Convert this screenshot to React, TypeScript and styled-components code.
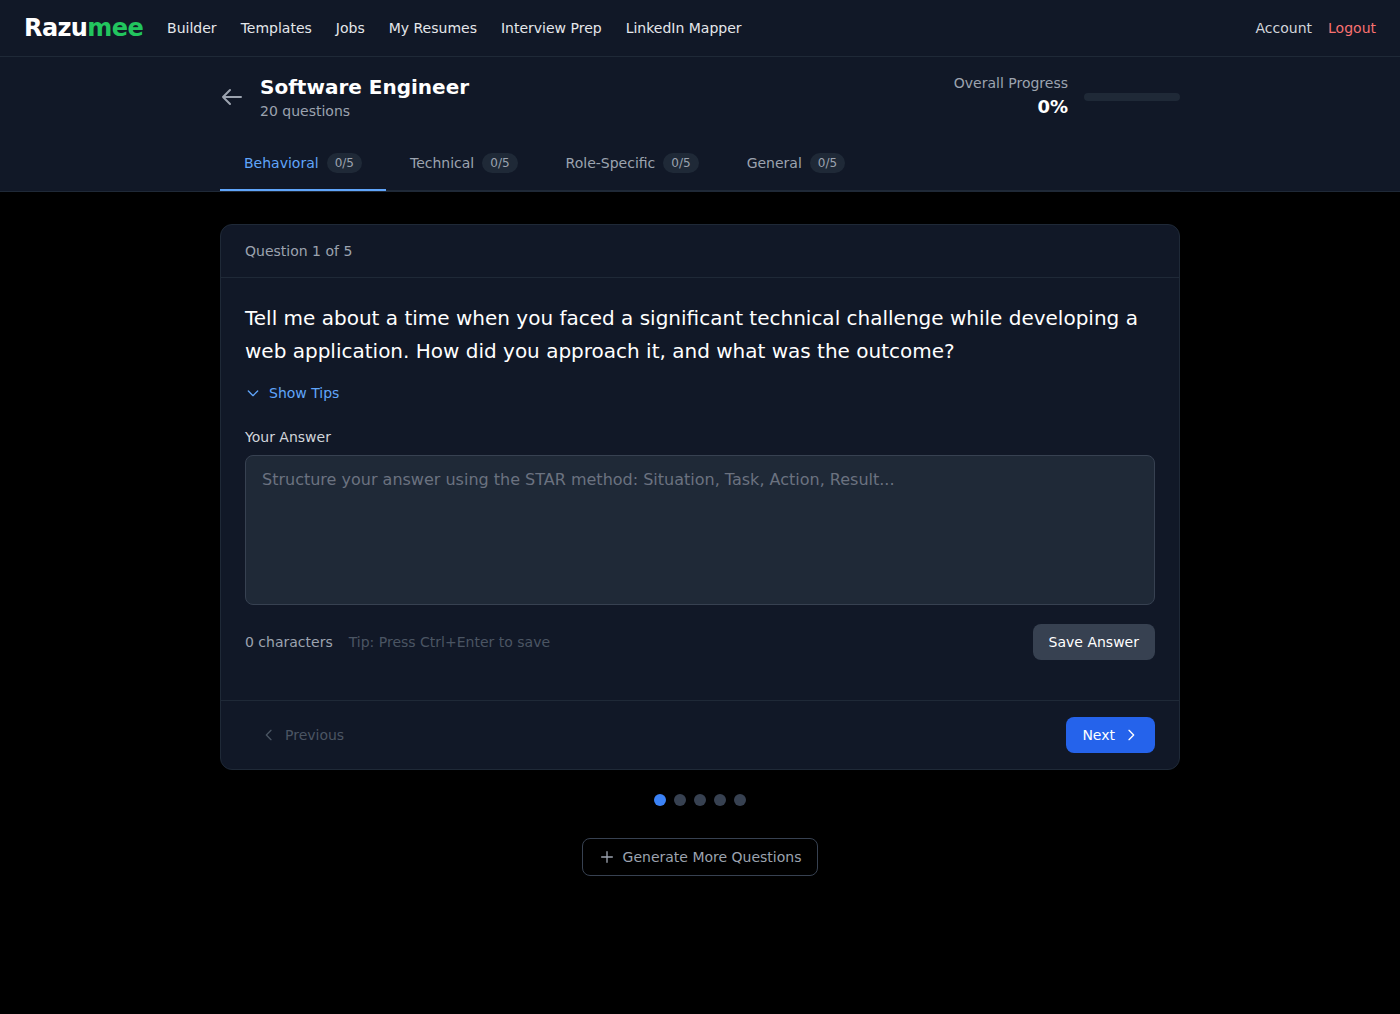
import React, { useState } from 'react'
import styled, { createGlobalStyle } from 'styled-components';

const GlobalStyle = createGlobalStyle`
  *, *::before, *::after {
    box-sizing: border-box;
  }
  body {
    margin: 0;
    background: #000;
    color: #fff;
    font-family: "DejaVu Sans", sans-serif;
    font-size: 14px;
    line-height: 20px;
  }
  button, textarea {
    font: inherit;
    color: inherit;
    margin: 0;
  }
  button {
    padding: 0;
    border: 0;
    background: none;
    cursor: pointer;
  }
  p, h1, h2 {
    margin: 0;
  }
`;

const Page = styled.div`
  min-height: 100vh;
`;

const Navbar = styled.nav`
  display: flex;
  align-items: center;
  justify-content: space-between;
  height: 57px;
  padding: 0 24px;
  background: #111827;
  border-bottom: 1px solid #1f2937;
`;
const NavGroup = styled.div<{ $gap: number }>`
  display: flex;
  align-items: center;
  gap: ${({ $gap }) => $gap}px;
`;
const Logo = styled.a`
  font-size: 24px;
  line-height: 32px;
  font-weight: 700;
  letter-spacing: -0.6px;
  span {
    color: #22c55e;
  }
`;
const NavLink = styled.a<{ $color?: string }>`
  color: ${({ $color }) => $color || '#e5e7eb'};
  cursor: pointer;
`;

const Header = styled.header`
  background: #111827;
  border-bottom: 1px solid #1f2937;
`;
const Container = styled.div`
  width: 960px;
  margin: 0 auto;
`;
const TitleRow = styled.div`
  display: flex;
  align-items: center;
  justify-content: space-between;
  height: 80px;
`;
const BackButton = styled.button`
  display: flex;
  color: #9ca3af;
`;
const Title = styled.h1`
  font-size: 20px;
  line-height: 28px;
  font-weight: 700;
`;
const Muted = styled.p`
  color: #9ca3af;
`;
const Progress = styled.div`
  text-align: right;
`;
const Percent = styled.p`
  font-size: 18px;
  line-height: 28px;
  font-weight: 700;
`;
const Track = styled.div`
  width: 96px;
  height: 8px;
  border-radius: 4px;
  background: #1f2937;
  overflow: hidden;
`;
const Fill = styled.div`
  height: 100%;
  background: #3b82f6;
`;

const Tabs = styled.div`
  display: flex;
  height: 54px;
  border-bottom: 1px solid #1f2937;
`;
const Tab = styled.button<{ $active: boolean }>`
  display: flex;
  align-items: center;
  gap: 8px;
  height: 54px;
  padding: 0 24px;
  color: ${({ $active }) => ($active ? '#60a5fa' : '#9ca3af')};
  border-bottom: 2px solid ${({ $active }) => ($active ? '#60a5fa' : 'transparent')};
`;
const Count = styled.span`
  padding: 2px 8px;
  border-radius: 10px;
  background: #1f2937;
  color: #9ca3af;
  font-size: 12px;
  line-height: 16px;
`;

const Main = styled.main`
  width: 960px;
  margin: 0 auto;
  padding: 32px 0;
`;
const Card = styled.section`
  background: #111827;
  border: 1px solid #1f2937;
  border-radius: 12px;
`;
const CardHeader = styled.div`
  padding: 16px 24px;
  color: #9ca3af;
  border-bottom: 1px solid #1f2937;
`;
const CardBody = styled.div`
  padding: 24px 24px 40px;
`;
const Question = styled.h2`
  font-size: 20px;
  line-height: 32.5px;
  font-weight: 400;
`;
const TipsButton = styled.button`
  display: flex;
  align-items: center;
  gap: 8px;
  margin-top: 16px;
  color: #60a5fa;
`;
const Label = styled.label`
  display: block;
  margin: 24px 0 8px;
  color: #d1d5db;
`;
const Answer = styled.textarea`
  display: block;
  width: 100%;
  height: 150px;
  padding: 12px 16px;
  background: #1f2937;
  border: 1px solid #374151;
  border-radius: 8px;
  font-size: 16px;
  line-height: 24px;
  resize: none;
  &::placeholder {
    color: #6b7280;
  }
`;
const Row = styled.div`
  display: flex;
  align-items: center;
  justify-content: space-between;
`;
const AnswerFooter = styled(Row)`
  margin-top: 19px;
`;
const Hint = styled.span`
  color: #4b5563;
`;
const CardFooter = styled(Row)`
  padding: 16px 24px;
  border-top: 1px solid #1f2937;
`;
const Button = styled.button<{ $bg?: string; $color?: string }>`
  display: flex;
  align-items: center;
  gap: 8px;
  height: 36px;
  padding: 0 16px;
  border-radius: 8px;
  background: ${({ $bg }) => $bg || 'transparent'};
  color: ${({ $color }) => $color || '#fff'};
`;
const Dots = styled.div`
  display: flex;
  justify-content: center;
  gap: 8px;
  margin-top: 24px;
`;
const Dot = styled.button<{ $active: boolean }>`
  width: 12px;
  height: 12px;
  border-radius: 50%;
  background: ${({ $active }) => ($active ? '#3b82f6' : '#374151')};
`;
const GenerateButton = styled(Button)`
  height: 38px;
  margin: 32px auto 0;
  border: 1px solid #374151;
`;

const icons = {
  back: 'M10 19l-7-7m0 0l7-7m-7 7h18',
  down: 'M19 9l-7 7-7-7',
  left: 'M15 19l-7-7 7-7',
  right: 'M9 5l7 7-7 7',
  plus: 'M12 4v16m8-8H4',
};
const Icon = ({ name, size = 16 }: { name: keyof typeof icons; size?: number }) => (
  <svg width={size} height={size} viewBox="0 0 24 24" fill="none" stroke="currentColor">
    <path d={icons[name]} strokeWidth={2} strokeLinecap="round" strokeLinejoin="round" />
  </svg>
);

const links = ['Builder', 'Templates', 'Jobs', 'My Resumes', 'Interview Prep', 'LinkedIn Mapper'];
const tabs = ['Behavioral', 'Technical', 'Role-Specific', 'General'];
const total = 5;

const App = () => {
  const [tab, setTab] = useState(0);
  const [question, setQuestion] = useState(0);
  const [answer, setAnswer] = useState('');
  const progress = 0;

  return (
    <Page>
      <GlobalStyle />
      <Navbar>
        <NavGroup $gap={24}>
          <Logo>Razu<span>mee</span></Logo>
          {links.map((link) => <NavLink key={link}>{link}</NavLink>)}
        </NavGroup>
        <NavGroup $gap={16}>
          <NavLink $color="#d1d5db">Account</NavLink>
          <NavLink $color="#f87171">Logout</NavLink>
        </NavGroup>
      </Navbar>
      <Header>
        <Container>
          <TitleRow>
            <NavGroup $gap={16}>
              <BackButton aria-label="Back"><Icon name="back" size={24} /></BackButton>
              <div>
                <Title>Software Engineer</Title>
                <Muted>20 questions</Muted>
              </div>
            </NavGroup>
            <NavGroup $gap={16}>
              <Progress>
                <Muted>Overall Progress</Muted>
                <Percent>{progress}%</Percent>
              </Progress>
              <Track><Fill style={{ width: `${progress}%` }} /></Track>
            </NavGroup>
          </TitleRow>
          <Tabs>
            {tabs.map((name, i) => (
              <Tab key={name} $active={i === tab} onClick={() => setTab(i)}>
                {name}
                <Count>0/{total}</Count>
              </Tab>
            ))}
          </Tabs>
        </Container>
      </Header>
      <Main>
        <Card>
          <CardHeader>Question {question + 1} of {total}</CardHeader>
          <CardBody>
            <Question>
              Tell me about a time when you faced a significant technical challenge while developing a
              web application. How did you approach it, and what was the outcome?
            </Question>
            <TipsButton><Icon name="down" />Show Tips</TipsButton>
            <Label htmlFor="answer">Your Answer</Label>
            <Answer
              id="answer"
              value={answer}
              onChange={(e) => setAnswer(e.target.value)}
              placeholder="Structure your answer using the STAR method: Situation, Task, Action, Result..."
            />
            <AnswerFooter>
              <NavGroup $gap={16}>
                <Muted>{answer.length} characters</Muted>
                <Hint>Tip: Press Ctrl+Enter to save</Hint>
              </NavGroup>
              <Button $bg="#374151">Save Answer</Button>
            </AnswerFooter>
          </CardBody>
          <CardFooter>
            <Button
              $color="#4b5563"
              disabled={question === 0}
              onClick={() => setQuestion(question - 1)}
            >
              <Icon name="left" />Previous
            </Button>
            <Button
              $bg="#2563eb"
              disabled={question === total - 1}
              onClick={() => setQuestion(question + 1)}
            >
              Next<Icon name="right" />
            </Button>
          </CardFooter>
        </Card>
        <Dots>
          {Array.from({ length: total }, (_, i) => (
            <Dot
              key={i}
              $active={i === question}
              aria-label={`Question ${i + 1}`}
              onClick={() => setQuestion(i)}
            />
          ))}
        </Dots>
        <GenerateButton $color="#9ca3af">
          <Icon name="plus" />Generate More Questions
        </GenerateButton>
      </Main>
    </Page>
  )
}

export default App
